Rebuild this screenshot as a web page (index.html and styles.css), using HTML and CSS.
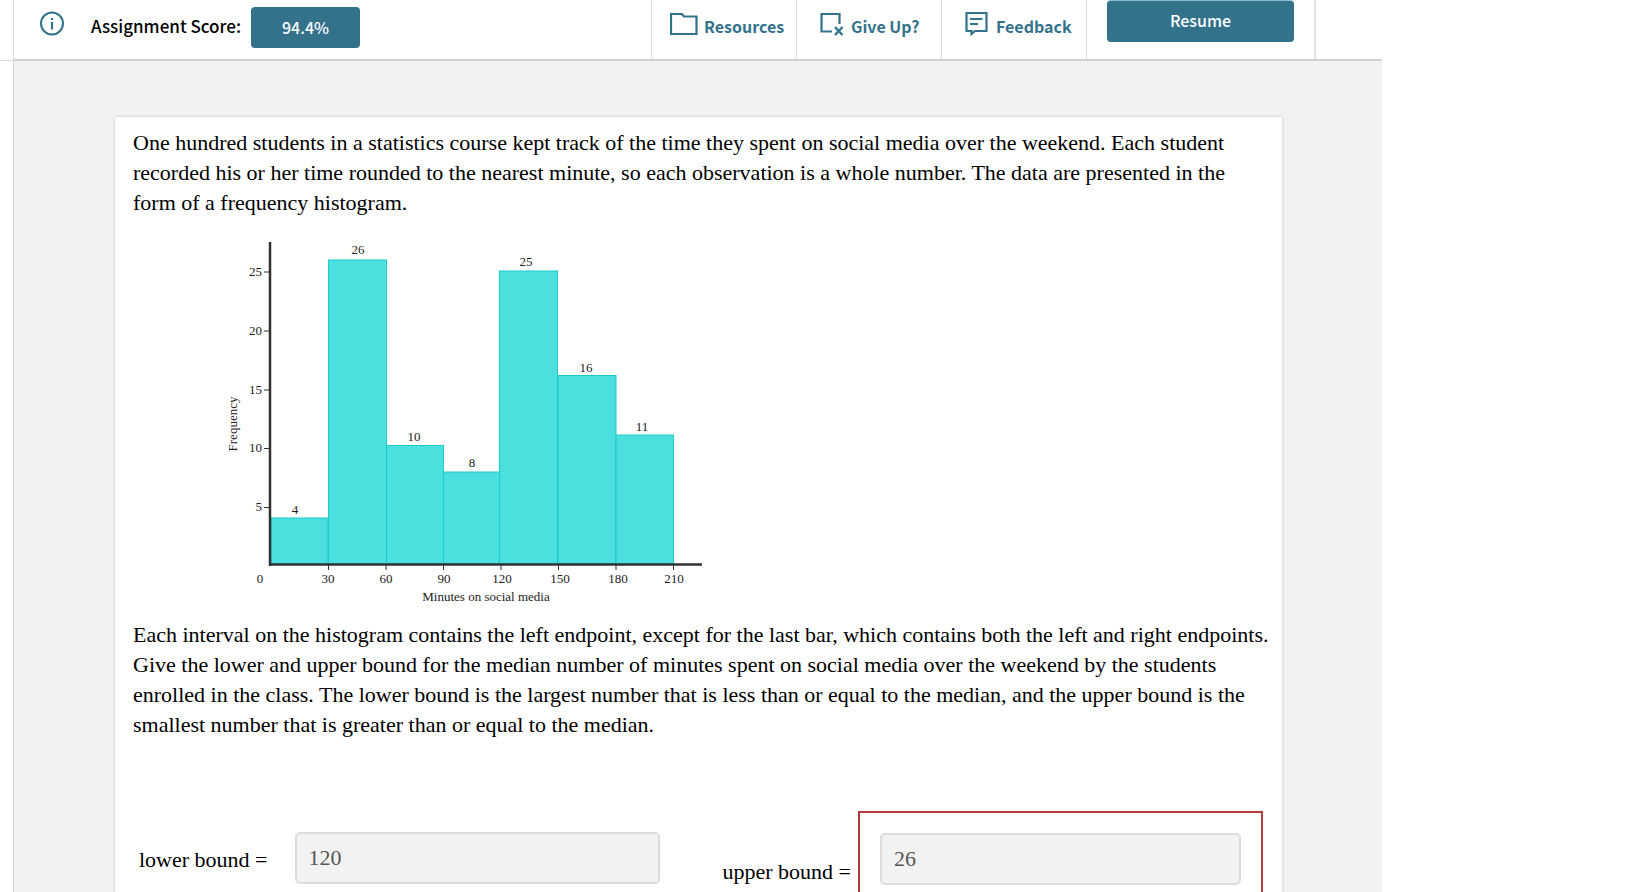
FILE: index.html
```html
<!DOCTYPE html>
<html lang="en">
  <head>
    <meta charset="utf-8">
    <title>Assignment</title>
    <link rel="stylesheet" href="styles.css">
  </head>
  <body>

    <div class="page">
      <div class="side"></div>
      <div class="main">

        <header class="topbar">
          <button type="button" class="info" aria-label="Info">
            <svg width="26" height="26" viewBox="0 0 26 26">
              <circle cx="13" cy="12.500" r="11" fill="none" stroke="#32728a" stroke-width="2"/>
              <path d="M13 11v7.500M13 7v2" stroke="#32728a" stroke-width="2.200"/>
            </svg>
          </button>
          <span class="score-label">Assignment Score:</span>
          <span class="score">94.4%</span>

          <nav class="tools">
            <a href="#" class="tool">
              <svg width="28" height="24" viewBox="0 0 28 24">
                <path d="M1 2h11l2 2.500h12.500v17.500H1z" fill="none" stroke="#32728a" stroke-width="2.200"/>
              </svg>
              Resources
            </a>
            <a href="#" class="tool">
              <svg width="25" height="24" viewBox="0 0 25 24">
                <path d="M12 19.500H1.500V2h18v10" fill="none" stroke="#32728a" stroke-width="2.200"/>
                <path d="M15 15l7.500 8M22.500 15l-7.500 8" stroke="#32728a" stroke-width="2.400"/>
              </svg>
              Give Up?
            </a>
            <a href="#" class="tool">
              <svg width="25" height="24" viewBox="0 0 25 24">
                <path d="M1.500 1h20v18H10L6.500 22v-3h-5z" fill="none" stroke="#32728a" stroke-width="2.200"/>
                <path d="M5 7h12.500M5 12h8" stroke="#32728a" stroke-width="2"/>
              </svg>
              Feedback
            </a>
            <div class="tool-resume">
              <button type="button" class="resume">Resume</button>
            </div>
          </nav>
        </header>

        <div class="card">
          <p>One hundred students in a statistics course kept track of the time they spent on social media over the weekend. Each student recorded his or her time rounded to the nearest minute, so each observation is a whole number. The data are presented in the form of a frequency histogram.</p>

          <svg class="chart" width="600" height="402" viewBox="133 218 600 402" role="img" aria-label="Frequency histogram">
            <!-- bars -->
            <g fill="#4be0de" stroke="#1accca" stroke-width="1">
              <rect x="271" y="518" width="57" height="46"/>
              <rect x="328.500" y="260" width="58" height="304"/>
              <rect x="386.500" y="445.500" width="57" height="118"/>
              <rect x="443.500" y="472" width="56" height="92"/>
              <rect x="499.500" y="271" width="58" height="293"/>
              <rect x="558" y="375.500" width="58" height="188"/>
              <rect x="616" y="435" width="57.500" height="129"/>
            </g>
            <!-- axes and ticks -->
            <path d="M270 242v324M269 564.500h433" stroke="#2f3333" stroke-width="2.500"/>
            <path d="M264 272h6M264 331h6M264 390h6M264 448.500h6M264 507.500h6
                     M328.500 565v5M386 565v5M443.500 565v5M501 565v5M558.500 565v5M616 565v5M673.500 565v5" stroke="#333" stroke-width="1"/>
            <g class="y-labels">
              <text x="262" y="276">25</text>
              <text x="262" y="335">20</text>
              <text x="262" y="394">15</text>
              <text x="262" y="452">10</text>
              <text x="262" y="511">5</text>
            </g>
            <g class="x-labels">
              <text x="260" y="583">0</text>
              <text x="328" y="583">30</text>
              <text x="386" y="583">60</text>
              <text x="444" y="583">90</text>
              <text x="502" y="583">120</text>
              <text x="560" y="583">150</text>
              <text x="618" y="583">180</text>
              <text x="674" y="583">210</text>
              <text x="486" y="601">Minutes on social media</text>
              <text transform="translate(237 424) rotate(-90)">Frequency</text>

              <text x="295" y="514">4</text>
              <text x="358" y="254">26</text>
              <text x="414" y="441">10</text>
              <text x="472" y="467">8</text>
              <text x="526" y="266">25</text>
              <text x="586" y="372">16</text>
              <text x="642" y="431">11</text>
            </g>
          </svg>

          <p>Each interval on the histogram contains the left endpoint, except for the last bar, which contains both the left and right endpoints. Give the lower and upper bound for the median number of minutes spent on social media over the weekend by the students enrolled in the class. The lower bound is the largest number that is less than or equal to the median, and the upper bound is the smallest number that is greater than or equal to the median.</p>

          <div class="answers">
            <div class="answer lower">
              <label for="lower">lower bound =</label>
              <input type="text" id="lower" value="120" readonly>
            </div>
            <div class="answer upper">
              <label for="upper">upper bound =</label>
              <div class="wrong">
                <input type="text" id="upper" value="26" readonly>
              </div>
            </div>
          </div>
        </div>

      </div>
    </div>

  </body>
</html>
```
FILE: styles.css
```css
* {
  box-sizing: border-box;
}
body {
  margin: 0;
  background: #fff;
  color: #000;
  font-family: "Liberation Serif", serif;
  font-size: 22px;
  line-height: 30px;
}

.page {
  display: flex;
  height: 100vh;
  padding-right: 268px;
  overflow: hidden;
}
.side {
  width: 13px;
  flex: none;
}
.side::before {
  content: "";
  display: block;
  height: 60px;
  border-bottom: 1px solid #ddd;
}
.main {
  flex: 1;
  background: #f2f2f2;
  border-left: 1px solid #d8d8d8;
}

.topbar {
  display: flex;
  align-items: flex-start;
  height: 61px;
  background: #fff;
  border-bottom: 2px solid #d0d0d0;
  font-family: "Noto Sans CJK JP", sans-serif;
  font-size: 16px;
  font-weight: 500;
  line-height: 24px;
}
.info {
  width: 26px;
  height: 26px;
  margin: 11px 26px 0 25px;
  padding: 0;
  border: 0;
  background: none;
}
.info svg {
  display: block;
}
.score-label {
  padding-top: 14px;
  font-size: 17px;
}
.score {
  width: 109px;
  margin: 7px 0 0 10px;
  padding: 8px 0 9px;
  border-radius: 4px;
  background: #32728a;
  color: #fff;
  text-align: center;
}

.tools {
  display: flex;
  align-self: stretch;
  margin-left: auto;
  margin-right: 66px;
}
.tool {
  display: flex;
  gap: 6px;
  width: 145px;
  padding: 12px 0 0 18px;
  border-left: 1px solid #ddd;
  color: #32728a;
  font-weight: 700;
  line-height: 28px;
  text-decoration: none;
  white-space: nowrap;
}
.tool + .tool {
  padding-left: 23px;
}
.tool-resume {
  width: 230px;
  padding: 0 20px;
  border-left: 1px solid #ddd;
  border-right: 2px solid #e2e2e2;
}
.resume {
  width: 100%;
  height: 42px;
  padding: 0 0 3px;
  border: 0;
  border-top: 1px solid #8dbccb;
  border-radius: 4px;
  background: #32728a;
  color: #fff;
  font: inherit;
}

.card {
  min-height: 900px;
  margin: 56px 100px 0 101px;
  padding: 11px 11px 11px 18px;
  background: #fff;
  box-shadow: 0 0 3px rgba(0, 0, 0, 0.2);
}
.card p {
  margin: 0;
}
.chart {
  display: block;
}
.chart text {
  font-size: 13px;
  fill: #222;
}
.y-labels {
  text-anchor: end;
}
.x-labels {
  text-anchor: middle;
}

.answers {
  display: flex;
  align-items: flex-start;
  justify-content: space-between;
  margin: 71px 8px 0 0;
}
.answer {
  display: flex;
}
.lower {
  gap: 27px;
  padding: 21px 0 0 6px;
}
.lower label {
  padding-top: 13px;
}
.upper {
  gap: 7px;
}
.upper label {
  padding-top: 46px;
}
.answer input {
  width: 365px;
  height: 52px;
  padding: 0 12px;
  border: 2px solid #dcdcdc;
  border-radius: 5px;
  background: #f2f2f2;
  color: #555;
  font: inherit;
}
.wrong {
  width: 405px;
  height: 110px;
  padding: 20px;
  border: 2px solid #b53a3c;
}
.wrong input {
  width: 100%;
}
```
